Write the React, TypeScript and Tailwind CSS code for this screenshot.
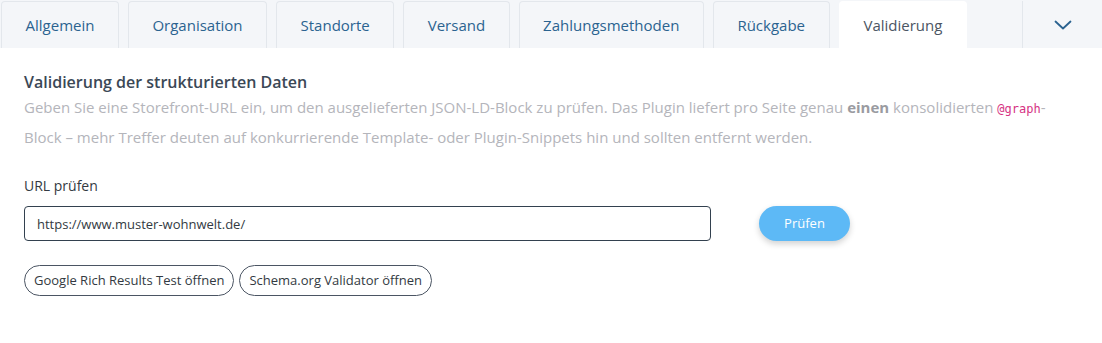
import React from "react";

const tabs = ["Allgemein", "Organisation", "Standorte", "Versand", "Zahlungsmethoden", "Rückgabe"];

const App = () => {
  return (
    <div className="w-[1102px] h-[343px] bg-white font-['Open_Sans',sans-serif] overflow-hidden">
      <div className="flex items-end gap-[9px] h-[48px] bg-[#f4f6f9] pl-[1px]">
        {tabs.map((t) => (
          <div
            key={t}
            className="h-[47px] flex items-center pt-[1px] px-[23.5px] border border-b-0 border-[#e3e7ec] rounded-t-[4px] text-[15px] text-[#2b6390]"
          >
            {t}
          </div>
        ))}
        <div className="h-[47px] flex items-center pt-[1px] px-[25px] rounded-t-[4px] bg-white text-[15px] text-[#4b5563]">
          Validierung
        </div>
        <div className="ml-auto h-[47px] w-[80px] flex items-center justify-center border-l border-[#e3e7ec]">
          <svg width="18" height="10" viewBox="0 0 18 10" fill="none">
            <path d="M1.5 1.5 L9 8.5 L16.5 1.5" stroke="#2b6390" strokeWidth="1.8" strokeLinecap="round" strokeLinejoin="round" />
          </svg>
        </div>
      </div>

      <div className="px-[24px] pt-[23px]">
        <h2 className="text-[16px] font-semibold text-[#3b4856] leading-[22px]">
          Validierung der strukturierten Daten
        </h2>
        <p className="text-[15px] leading-[28px] text-[#b4b5bb]">
          Geben Sie eine Storefront-URL ein, um den ausgelieferten JSON-LD-Block zu prüfen. Das Plugin liefert pro Seite genau{" "}
          <b className="font-bold text-[#9a9ba1]">einen</b> konsolidierten{" "}
          <code className="font-['DejaVu_Sans_Mono',monospace] text-[12px] text-[#d63384]">@graph</code>-Block – mehr Treffer
          deuten auf konkurrierende Template- oder Plugin-Snippets hin und sollten entfernt werden.
        </p>

        <div className="mt-[24px] text-[14px] text-[#333a42]">URL prüfen</div>
        <div className="mt-[10px] flex items-center">
          <input
            type="text"
            defaultValue="https://www.muster-wohnwelt.de/"
            className="w-[687px] h-[35px] border border-[#33414f] rounded-[4px] px-[12px] text-[13px] text-[#333a42] outline-none"
          />
          <button className="ml-[48px] w-[91px] h-[35px] rounded-full bg-[#5db9f6] text-white text-[13px] shadow-[0_3px_6px_rgba(0,0,0,0.18)]">
            Prüfen
          </button>
        </div>

        <div className="mt-[24px] flex gap-[5px]">
          <button className="h-[31px] px-[9px] rounded-full border border-[#4b5563] text-[13px] text-[#333a42]">
            Google Rich Results Test öffnen
          </button>
          <button className="h-[31px] px-[9px] rounded-full border border-[#4b5563] text-[13px] text-[#333a42]">
            Schema.org Validator öffnen
          </button>
        </div>
      </div>
    </div>
  );
};

export default App;
